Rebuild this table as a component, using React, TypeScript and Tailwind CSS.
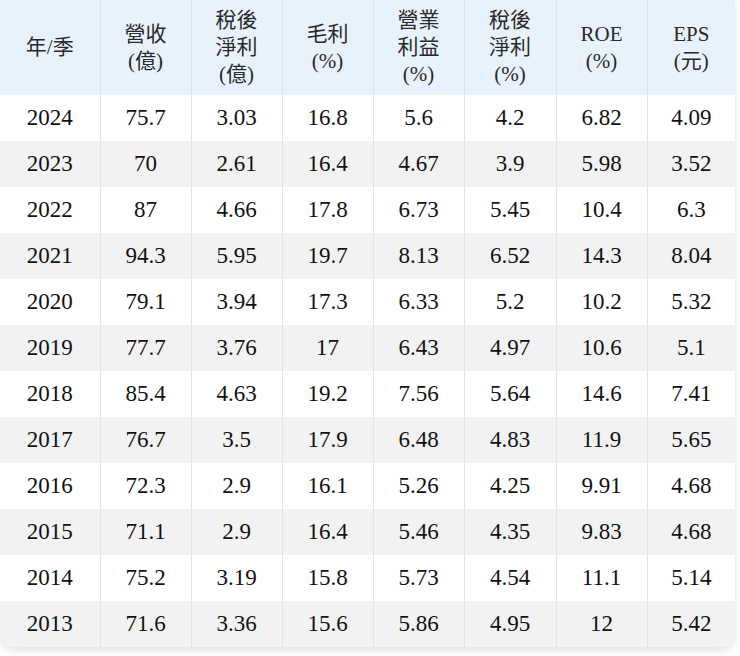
import React from 'react';

const headers: string[][] = [
  ['年/季'],
  ['營收', '(億)'],
  ['稅後', '淨利', '(億)'],
  ['毛利', '(%)'],
  ['營業', '利益', '(%)'],
  ['稅後', '淨利', '(%)'],
  ['ROE', '(%)'],
  ['EPS', '(元)'],
];

const widths = ['w-[100px]', 'w-[91px]', 'w-[91px]', 'w-[91px]', 'w-[91px]', 'w-[92px]', 'w-[91px]', 'w-[88px]'];

const rows: (string | number)[][] = [
  [2024, '75.7', '3.03', '16.8', '5.6', '4.2', '6.82', '4.09'],
  [2023, '70', '2.61', '16.4', '4.67', '3.9', '5.98', '3.52'],
  [2022, '87', '4.66', '17.8', '6.73', '5.45', '10.4', '6.3'],
  [2021, '94.3', '5.95', '19.7', '8.13', '6.52', '14.3', '8.04'],
  [2020, '79.1', '3.94', '17.3', '6.33', '5.2', '10.2', '5.32'],
  [2019, '77.7', '3.76', '17', '6.43', '4.97', '10.6', '5.1'],
  [2018, '85.4', '4.63', '19.2', '7.56', '5.64', '14.6', '7.41'],
  [2017, '76.7', '3.5', '17.9', '6.48', '4.83', '11.9', '5.65'],
  [2016, '72.3', '2.9', '16.1', '5.26', '4.25', '9.91', '4.68'],
  [2015, '71.1', '2.9', '16.4', '5.46', '4.35', '9.83', '4.68'],
  [2014, '75.2', '3.19', '15.8', '5.73', '4.54', '11.1', '5.14'],
  [2013, '71.6', '3.36', '15.6', '5.86', '4.95', '12', '5.42'],
];

export default function App() {
  return (
    <div className="w-[740px] h-[656px] bg-white">
      <div className="w-[735px] rounded-b-[14px] overflow-hidden shadow-[0_3px_8px_rgba(0,0,0,0.12)] font-['Liberation_Serif','Noto_Sans_CJK_TC',serif] text-[#111]">
        <table className="w-full table-fixed border-collapse">
          <thead>
            <tr className="h-[95px] bg-[#e8f2fc]">
              {headers.map((h, i) => (
                <th
                  key={i}
                  className={`${widths[i]} p-0 font-normal text-[21px] leading-[27px] text-[#2a2a2a] align-middle text-center ${i < 7 ? 'border-r border-[#d9e3ec]' : ''}`}
                >
                  {h.map((line, j) => (
                    <div key={j}>{line}</div>
                  ))}
                </th>
              ))}
            </tr>
          </thead>
          <tbody>
            {rows.map((r, ri) => (
              <tr key={ri} className={`h-[46px] ${ri % 2 === 1 ? 'bg-[#f2f2f2]' : 'bg-white'}`}>
                {r.map((c, ci) => (
                  <td
                    key={ci}
                    className={`p-0 text-center text-[23px] ${ci < 7 ? 'border-r border-[#e4e4e4]' : ''}`}
                  >
                    {c}
                  </td>
                ))}
              </tr>
            ))}
          </tbody>
        </table>
      </div>
    </div>
  );
}
